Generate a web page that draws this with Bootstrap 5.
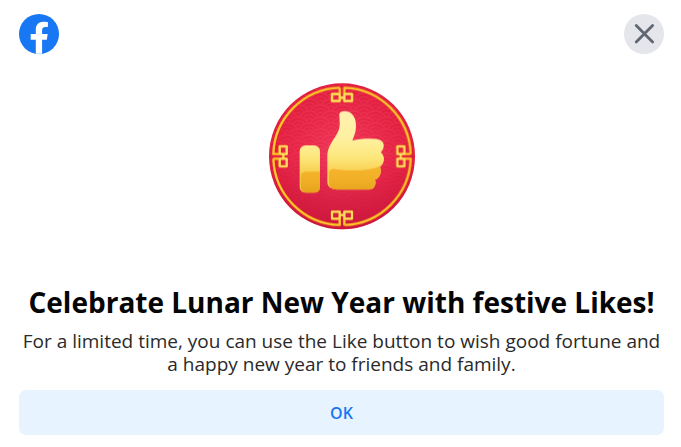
<!DOCTYPE html>
<html lang="en">
<head>
<meta charset="utf-8">
<meta name="viewport" content="width=device-width, initial-scale=1">
<title>Lunar New Year</title>
<link href="https://cdn.jsdelivr.net/npm/bootstrap@5.3.0/dist/css/bootstrap.min.css" rel="stylesheet">
<style>
body { font-family: "Open Sans", "Noto Sans", sans-serif; color: #050505; }
.promo { padding: 14px 17px 12px 19px; }
.brand-logo, .close-btn { width: 40px; height: 40px; }
.close-btn { background: #e4e6eb; }
.close-btn:hover { background: #d8dadf; }
.hero-art { width: 146px; height: 146px; margin: 29px 0 53px; }
.promo-title { font-size: 28px; line-height: 40px; font-weight: 700; margin-bottom: 8px; }
.promo-copy { font-size: 19px; line-height: 23px; font-weight: 400; color: #2a2a2a; margin-bottom: 14px; }
.ok-btn { height: 45px; border-radius: 7px; background: #e7f3ff; color: #1877f2; font-size: 16px; font-weight: 600; }
.ok-btn:hover { background: #dbe7f2; color: #1877f2; }
</style>
</head>
<body class="bg-white">
<main class="promo d-flex flex-column">
  <header class="d-flex justify-content-between align-items-center">
    <a href="#" class="d-block lh-1" aria-label="Facebook">
      <svg class="brand-logo d-block" viewBox="0 0 40 40" aria-hidden="true">
        <circle cx="20" cy="20" r="20" fill="#1877f2"/>
        <path d="M16.8 39.8V25.8h-5.1V20h5.1v-4.4c0-5 3-7.8 7.6-7.8 2.2 0 4.5.4 4.5.4v4.9h-2.5c-2.5 0-3.3 1.6-3.3 3.2V20h5.6l-.9 5.8h-4.7v14z" fill="#fff"/>
      </svg>
    </a>
    <button type="button" class="close-btn btn rounded-circle border-0 p-0" aria-label="Close">
      <svg class="d-block" width="40" height="40" viewBox="0 0 40 40" fill="none" stroke="#606770" stroke-width="2.8" stroke-linecap="round" aria-hidden="true"><path d="M12.2 11.6l16.4 16.4M28.6 11.6L12.2 28"/></svg>
    </button>
  </header>

  <svg class="hero-art align-self-center" viewBox="23 21 438 438" overflow="visible" role="img" aria-label="Festive thumbs up">
    <defs>
      <radialGradient id="red" cx=".5" cy=".5" r=".52">
        <stop offset="0" stop-color="#f23d5d"/><stop offset=".6" stop-color="#e92748"/><stop offset="1" stop-color="#e01a3b"/>
      </radialGradient>
      <linearGradient id="shade" x1="0" y1="0" x2="0" y2="1">
        <stop offset=".5" stop-color="#b5103a" stop-opacity="0"/><stop offset="1" stop-color="#b5103a" stop-opacity=".5"/>
      </linearGradient>
      <linearGradient id="gold" gradientUnits="userSpaceOnUse" x1="0" y1="105" x2="0" y2="290">
        <stop offset="0" stop-color="#fff0b0"/><stop offset=".45" stop-color="#fff0a0"/><stop offset=".75" stop-color="#fde77c"/><stop offset="1" stop-color="#f9cf50"/>
      </linearGradient>
      <linearGradient id="deep" gradientUnits="userSpaceOnUse" x1="0" y1="275" x2="0" y2="350">
        <stop offset="0" stop-color="#f5b52c"/><stop offset=".5" stop-color="#f1af27"/><stop offset="1" stop-color="#e6a21c"/>
      </linearGradient>
      <linearGradient id="fade" x1="0" y1="0" x2="0" y2="1">
        <stop offset="0" stop-color="#fff"/><stop offset=".6" stop-color="#999"/><stop offset="1" stop-color="#111"/>
      </linearGradient>
      <mask id="waveMask"><rect x="23" y="22" width="438" height="438" fill="url(#fade)"/></mask>
      <g id="scale">
        <circle r="33" fill="#e32445" stroke="#f3506b" stroke-width="4"/>
        <circle r="22" fill="none" stroke="#f3506b" stroke-width="4"/>
        <circle r="11" fill="none" stroke="#f3506b" stroke-width="4"/>
      </g>
      <pattern id="waves" width="66" height="36" patternUnits="userSpaceOnUse" x="12" y="12">
        <use href="#scale" x="33" y="0"/>
        <use href="#scale" x="0" y="18"/><use href="#scale" x="66" y="18"/>
        <use href="#scale" x="33" y="36"/>
        <use href="#scale" x="0" y="54"/><use href="#scale" x="66" y="54"/>
      </pattern>
      <path id="hand" d="M234 118C232 109 241 105 252 105C273 106 285 126 284 150C284 168 278 180 273 194C300 187 330 187 350 190C365 193 370 204 366 216C364 222 361 226 358 229C366 235 370 246 367 256C365 264 361 269 356 272C360 281 359 293 354 301C350 307 345 310 341 311C344 319 343 330 336 336C332 340 325 341 318 341H238C215 341 198 336 198 318V240C198 220 207 205 218 188C229 171 236 160 235 140Z"/>
      <clipPath id="handClip"><use href="#hand"/></clipPath>
      <path id="knot" d="M448 234A206 206 0 0 0 249 35V75H272V54H249M235 35V75H212V54H235M235 65H249"/>
    </defs>
    <circle cx="242" cy="241" r="219" fill="url(#red)"/>
    <circle cx="242" cy="241" r="217" fill="url(#waves)" opacity=".28" mask="url(#waveMask)"/>
    <circle cx="242" cy="241" r="219" fill="url(#shade)"/>
    <g fill="none" stroke="#c9202f" stroke-width="10" opacity=".4">
      <use href="#knot"/><use href="#knot" transform="rotate(90 242 241)"/><use href="#knot" transform="rotate(180 242 241)"/><use href="#knot" transform="rotate(270 242 241)"/>
    </g>
    <g fill="none" stroke="#ffc928" stroke-width="7" stroke-linejoin="round">
      <use href="#knot"/><use href="#knot" transform="rotate(90 242 241)"/><use href="#knot" transform="rotate(180 242 241)"/><use href="#knot" transform="rotate(270 242 241)"/>
    </g>
    <g fill="none" stroke="#ffdc69" stroke-width="5" stroke-linejoin="round">
      <path id="tip" d="M249 54V75H272V54H249M235 54V75H212V54H235M235 65H249"/>
      <use href="#tip" transform="rotate(90 242 241)"/><use href="#tip" transform="rotate(180 242 241)"/><use href="#tip" transform="rotate(270 242 241)"/>
    </g>
    <rect x="115" y="208" width="61" height="142" rx="17" fill="url(#gold)"/>
    <path d="M118 304Q118 287 136 287H176V333Q176 350 159 350H135Q118 350 118 333Z" fill="url(#deep)"/>
    <use href="#hand" fill="url(#gold)"/>
    <path d="M203 292C203 281 211 277 222 279C270 287 325 284 357 270L375 270V350H225C209 336 203 330 203 318Z" fill="url(#deep)" clip-path="url(#handClip)"/>
  </svg>

  <h1 class="promo-title text-center">Celebrate Lunar New Year with festive Likes!</h1>
  <p class="promo-copy text-center">For a limited time, you can use the Like button to wish good fortune and a happy new year to friends and family.</p>
  <button type="button" class="ok-btn btn border-0 w-100 p-0">OK</button>
</main>
<script src="https://cdn.jsdelivr.net/npm/bootstrap@5.3.0/dist/js/bootstrap.bundle.min.js"></script>
</body>
</html>
